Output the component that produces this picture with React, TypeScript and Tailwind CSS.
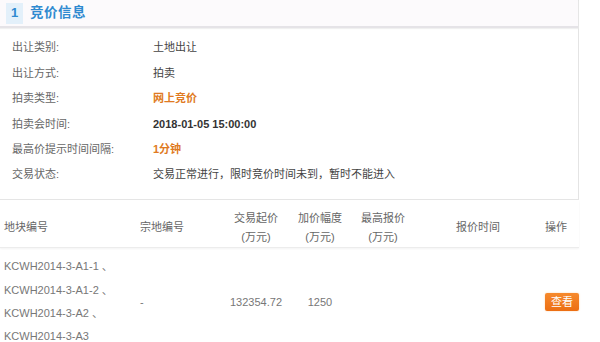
import React from "react";

const info = [
  { label: "出让类别:", value: "土地出让", tone: "plain" },
  { label: "出让方式:", value: "拍卖", tone: "plain" },
  { label: "拍卖类型:", value: "网上竞价", tone: "orange" },
  { label: "拍卖会时间:", value: "2018-01-05 15:00:00", tone: "bold" },
  { label: "最高价提示时间间隔:", value: "1分钟", tone: "orange" },
  { label: "交易状态:", value: "交易正常进行，限时竞价时间未到，暂时不能进入", tone: "plain" },
];

const toneClass: Record<string, string> = {
  plain: "text-[#444]",
  orange: "text-[#e07a22] font-bold",
  bold: "text-[#333] font-bold",
};

const cols = "grid grid-cols-[135px_85px_72px_56px_70px_120px_41px]";

export default function App() {
  return (
    <div
      className="w-[600px] h-[342px] overflow-hidden bg-white text-[11px]"
      style={{ fontFamily: '"Liberation Sans", "Noto Sans CJK SC", sans-serif' }}
    >
      <div className="w-[579px] border-r border-b border-[#e4e4e4]">
        <div className="h-[28px] flex items-center bg-[#fcfafc] border-b-2 border-[#e5e3e7] shadow-[0_1px_1px_#f0f0f0]">
          <span className="ml-[6px] w-[17px] h-[21px] flex items-center justify-center bg-[#e3f0fa] text-[#2f8ad0] font-bold text-[13px]">
            1
          </span>
          <span className="ml-[7px] text-[#2f8ad0] font-bold text-[13.5px] tracking-[0.5px]">竞价信息</span>
        </div>
        <div className="pt-[7px] pb-[12px]">
          {info.map((r) => (
            <div key={r.label} className="flex items-center h-[25.4px]">
              <span className="w-[153px] pl-[12px] text-[#666]">{r.label}</span>
              <span className={toneClass[r.tone]}>{r.value}</span>
            </div>
          ))}
        </div>
      </div>

      <div className="w-[579px]">
        <div className={`${cols} h-[48px] pt-[8px] items-center leading-[19px] text-[#666] border-b border-[#ececec] shadow-[0_1px_2px_#f3f3f3]`}>
          <div className="pl-[4px]">地块编号</div>
          <div className="pl-[5px]">宗地编号</div>
          <div className="text-center">交易起价<br />(万元)</div>
          <div className="text-center">加价幅度<br />(万元)</div>
          <div className="text-center">最高报价<br />(万元)</div>
          <div className="text-center">报价时间</div>
          <div className="pl-[7px]">操作</div>
        </div>
        <div className={`${cols} py-[7px] items-center text-[#777]`}>
          <div className="pl-[4px] leading-[23.3px]">
            <div>KCWH2014-3-A1-1 、</div>
            <div>KCWH2014-3-A1-2 、</div>
            <div>KCWH2014-3-A2 、</div>
            <div>KCWH2014-3-A3</div>
          </div>
          <div className="pl-[5px]">-</div>
          <div className="text-center">132354.72</div>
          <div className="text-center">1250</div>
          <div />
          <div />
          <div className="pl-[7px]">
            <button className="w-[34px] h-[18px] rounded-[2px] bg-gradient-to-b from-[#f68a2c] to-[#ec6e12] text-white text-[11px] leading-[18px] shadow-[0_0_2px_#fbd2a8]">
              查看
            </button>
          </div>
        </div>
      </div>
    </div>
  );
}
